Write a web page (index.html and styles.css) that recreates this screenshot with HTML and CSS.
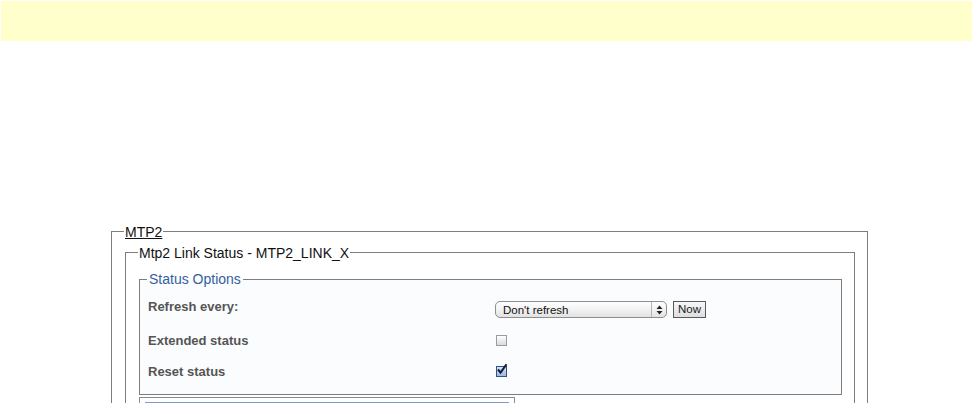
FILE: index.html
```html
<!DOCTYPE html>
<html>
<head>
  <title>MTP2 Link Status</title>
  <meta charset="utf-8">
  <link rel="stylesheet" href="styles.css">
</head>
<body>

  <div class="banner"></div>

  <div class="page">
    <fieldset class="box outer">
      <legend class="cap"><span class="u">MTP2</span></legend>

      <fieldset class="box link">
        <legend class="cap">Mtp2 Link Status - MTP2_LINK_X</legend>

        <fieldset class="box opts">
          <legend class="optsTitle">Status Options</legend>
          <div class="optGrid">
            <div class="lbl lblFirst">Refresh every:</div>
            <div class="ctl">
              <div class="select">
                <span class="selText">Don't refresh</span>
                <span class="selArrows">
                  <svg width="7" height="10" viewBox="0 0 7 10"><path d="M3.5 0.5 L6.5 4 L0.5 4 Z M0.5 6 L6.5 6 L3.5 9.5 Z" fill="#222"/></svg>
                </span>
              </div>
              <div class="btn">Now</div>
            </div>

            <div class="lbl">Extended status</div>
            <div class="ctl"><span class="check"></span></div>

            <div class="lbl">Reset status</div>
            <div class="ctl">
              <span class="check on">
                <svg class="tick" width="12" height="12" viewBox="0 0 12 12"><path d="M2 6.5 L4.6 9.6 L10.5 1.2" fill="none" stroke="#0c1a33" stroke-width="2"/></svg>
              </span>
            </div>
          </div>
        </fieldset>

        <div class="tableBox"><div class="tableHead"></div></div>
      </fieldset>
    </fieldset>
  </div>

</body>
</html>
```

FILE: styles.css
```css
body {
  margin: 0;
  font-family: "Liberation Sans", Arial, sans-serif;
  background: #fff;
}

.banner {
  margin: 1px 1px 0 1px;
  height: 40px;
  background-color: #ffffcb;
}

.page {
  margin: 182px 0 0 111px;
  width: 757px;
}

/* fieldsets */
.box {
  margin: 0;
  min-width: 0;
  border: 1px solid #7d7d7d;
}
.outer {
  padding: 4px 12px 30px 13px;
}
.link {
  padding: 11px 12px 30px 13px;
}
.opts {
  padding: 7px 8px 7px 8px;
  background-color: #fbfcfe;
}

.cap {
  margin-left: -1px;
  padding: 1px 1px 0 1px;
  font-size: 14px;
  line-height: 16px;
  color: #111;
}
.u {
  text-decoration: underline;
}
.optsTitle {
  margin-left: -1px;
  padding: 0 2px;
  font-size: 14px;
  line-height: 15px;
  color: #35609f;
}

/* option rows */
.optGrid {
  display: grid;
  grid-template-columns: 347px 1fr;
  grid-auto-rows: 31px;
  align-items: center;
}
.lbl {
  font-size: 13px;
  font-weight: bold;
  line-height: 15px;
  color: #555;
}
.lblFirst {
  padding-bottom: 6px;
}
.ctl {
  display: flex;
  align-items: center;
}

.select {
  display: flex;
  align-items: center;
  width: 172px;
  height: 17px;
  box-sizing: border-box;
  border: 1px solid #8e8e8e;
  border-radius: 5px;
  background: linear-gradient(#ffffff, #f1f1f1 55%, #e2e2e2);
}
.selText {
  flex: 1;
  padding-left: 7px;
  font-size: 11.5px;
  color: #111;
}
.selArrows {
  display: flex;
  align-items: center;
  justify-content: center;
  width: 14px;
  height: 15px;
  border-left: 1px solid #b5b5b5;
}

.btn {
  margin-left: 6px;
  width: 33px;
  height: 17px;
  box-sizing: border-box;
  border: 1px solid #5a5a5a;
  background: linear-gradient(#f7f7f7, #dedede);
  font-size: 11.5px;
  line-height: 15px;
  text-align: center;
  color: #1a1a1a;
}

.check {
  position: relative;
  margin-left: 1px;
  width: 11px;
  height: 11px;
  box-sizing: border-box;
  border: 1px solid #9c9c9c;
  background: linear-gradient(#ffffff, #dadada);
}
.check.on {
  border-color: #33507e;
  background: linear-gradient(#d4e2f5, #9db8de);
}
.tick {
  position: absolute;
  left: -1px;
  top: -4px;
}

/* table below the options */
.tableBox {
  margin-top: 2px;
  width: 376px;
  height: 80px;
  box-sizing: border-box;
  border: 1px solid #8c8c8c;
  padding: 4px 5px;
}
.tableHead {
  border-top: 1px solid #7b9dcb;
}
```
